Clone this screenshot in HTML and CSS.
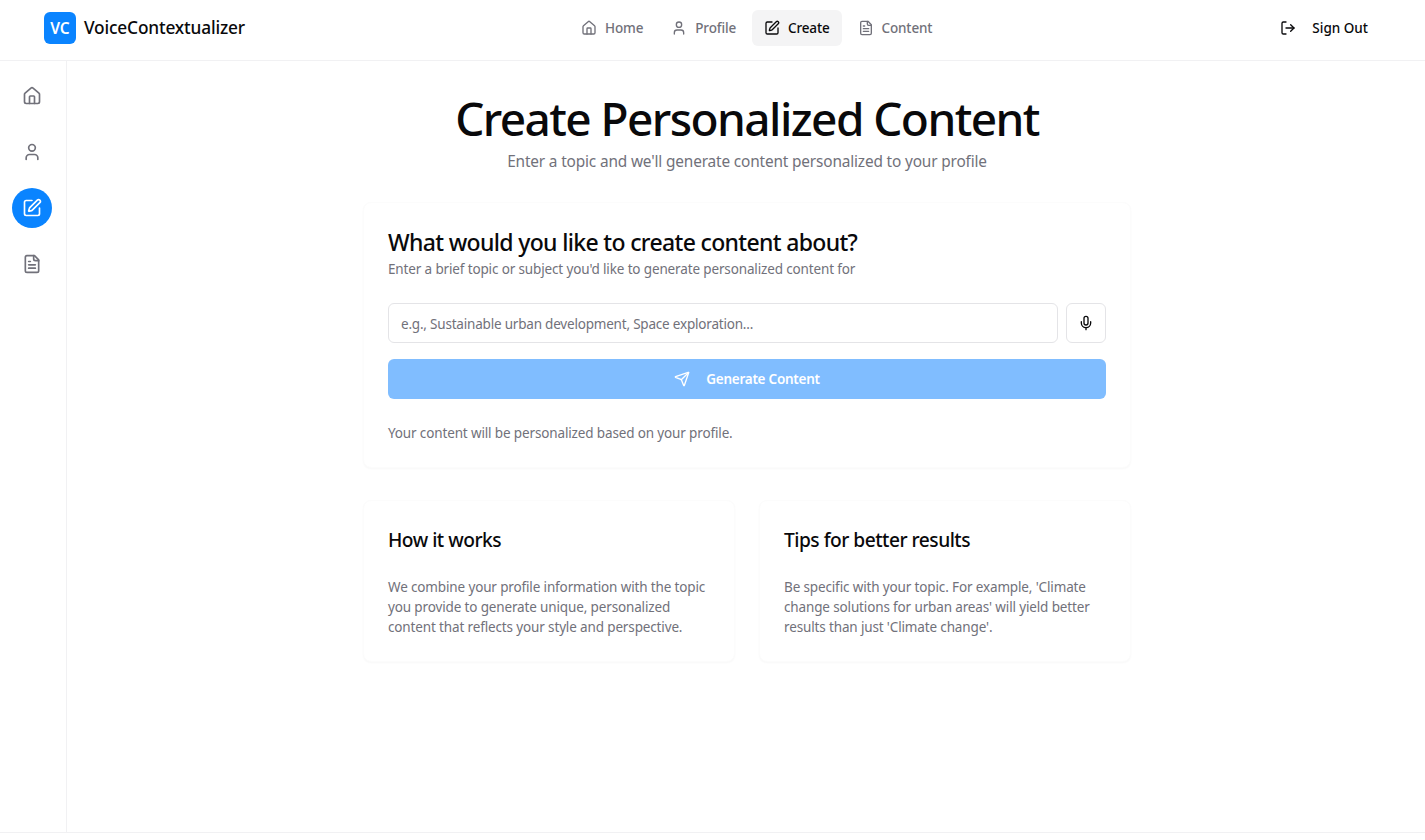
FILE: index.html
```html
<!DOCTYPE html>
<html lang="en">
<head>
<meta charset="utf-8">
<title>VoiceContextualizer</title>
<link rel="stylesheet" href="styles.css">
</head>
<body>
<svg class="defs" aria-hidden="true">
  <symbol id="i-home" viewBox="0 0 24 24"><path d="M15 21v-8a1 1 0 0 0-1-1h-4a1 1 0 0 0-1 1v8"/><path d="M3 10a2 2 0 0 1 .709-1.528l7-5.999a2 2 0 0 1 2.582 0l7 5.999A2 2 0 0 1 21 10v9a2 2 0 0 1-2 2H5a2 2 0 0 1-2-2z"/></symbol>
  <symbol id="i-user" viewBox="0 0 24 24"><path d="M19 21v-2a4 4 0 0 0-4-4H9a4 4 0 0 0-4 4v2"/><circle cx="12" cy="7" r="4"/></symbol>
  <symbol id="i-pen" viewBox="0 0 24 24"><path d="M12 3H5a2 2 0 0 0-2 2v14a2 2 0 0 0 2 2h14a2 2 0 0 0 2-2v-7"/><path d="M18.375 2.625a1 1 0 0 1 3 3l-9.013 9.014a2 2 0 0 1-.853.505l-2.873.84a.5.5 0 0 1-.62-.62l.84-2.873a2 2 0 0 1 .506-.852z"/></symbol>
  <symbol id="i-file" viewBox="0 0 24 24"><path d="M15 2H6a2 2 0 0 0-2 2v16a2 2 0 0 0 2 2h12a2 2 0 0 0 2-2V7Z"/><path d="M14 2v4a2 2 0 0 0 2 2h4"/><path d="M10 9H8"/><path d="M16 13H8"/><path d="M16 17H8"/></symbol>
  <symbol id="i-out" viewBox="0 0 24 24"><path d="M9 21H5a2 2 0 0 1-2-2V5a2 2 0 0 1 2-2h4"/><polyline points="16 17 21 12 16 7"/><line x1="21" x2="9" y1="12" y2="12"/></symbol>
  <symbol id="i-mic" viewBox="0 0 24 24"><path d="M12 2a3 3 0 0 0-3 3v7a3 3 0 0 0 6 0V5a3 3 0 0 0-3-3Z"/><path d="M19 10v2a7 7 0 0 1-14 0v-2"/><line x1="12" x2="12" y1="19" y2="22"/></symbol>
  <symbol id="i-send" viewBox="0 0 24 24"><path d="M14.536 21.686a.5.5 0 0 0 .937-.024l6.5-19a.496.496 0 0 0-.635-.635l-19 6.5a.5.5 0 0 0-.024.937l7.93 3.18a2 2 0 0 1 1.112 1.11z"/><path d="m21.854 2.147-10.94 10.939"/></symbol>
</svg>
<div class="app">
  <header class="topbar">
    <a class="brand" href="#"><span class="logo">VC</span><span class="brand-name">VoiceContextualizer</span></a>
    <nav class="topnav">
      <a class="navlink" href="#"><svg class="ic16"><use href="#i-home"/></svg>Home</a>
      <a class="navlink" href="#"><svg class="ic16"><use href="#i-user"/></svg>Profile</a>
      <a class="navlink active" href="#"><svg class="ic16"><use href="#i-pen"/></svg>Create</a>
      <a class="navlink" href="#"><svg class="ic16"><use href="#i-file"/></svg>Content</a>
    </nav>
    <button class="signout" type="button"><svg class="ic16"><use href="#i-out"/></svg>Sign Out</button>
  </header>
  <div class="body">
    <aside class="sidebar">
      <a class="sidelink" href="#"><svg class="ic20"><use href="#i-home"/></svg></a>
      <a class="sidelink" href="#"><svg class="ic20"><use href="#i-user"/></svg></a>
      <a class="sidelink current" href="#"><svg class="ic20"><use href="#i-pen"/></svg></a>
      <a class="sidelink" href="#"><svg class="ic20"><use href="#i-file"/></svg></a>
    </aside>
    <main class="main">
      <div class="column">
        <div class="intro">
          <h1>Create Personalized Content</h1>
          <p>Enter a topic and we'll generate content personalized to your profile</p>
        </div>
        <section class="card form-card">
          <h2>What would you like to create content about?</h2>
          <p class="muted">Enter a brief topic or subject you'd like to generate personalized content for</p>
          <div class="input-row">
            <input class="topic" type="text" placeholder="e.g., Sustainable urban development, Space exploration...">
            <button class="mic" type="button"><svg class="ic16"><use href="#i-mic"/></svg></button>
          </div>
          <button class="generate" type="button"><svg class="ic16"><use href="#i-send"/></svg>Generate Content</button>
          <p class="muted note">Your content will be personalized based on your profile.</p>
        </section>
        <div class="info-grid">
          <section class="card info-card">
            <h3>How it works</h3>
            <p class="muted">We combine your profile information with the topic you provide to generate unique, personalized content that reflects your style and perspective.</p>
          </section>
          <section class="card info-card">
            <h3>Tips for better results</h3>
            <p class="muted">Be specific with your topic. For example, 'Climate change solutions for urban areas' will yield better results than just 'Climate change'.</p>
          </section>
        </div>
      </div>
    </main>
  </div>
  <footer class="footer"></footer>
</div>
</body>
</html>
```
FILE: styles.css
```css
* { box-sizing: border-box; }
html, body { margin: 0; height: 100%; }
body {
  font-family: "Noto Sans", "Open Sans", sans-serif;
  color: #09090b;
  background: #fff;
  overflow: hidden;
}
a { color: inherit; text-decoration: none; }
.defs { display: none; }
svg { fill: none; stroke: currentColor; stroke-width: 2; stroke-linecap: round; stroke-linejoin: round; flex: none; }
.ic16 { width: 16px; height: 16px; }
.ic20 { width: 20px; height: 20px; }

.app { height: 840px; display: flex; flex-direction: column; }

.topbar {
  height: 61px;
  flex: none;
  display: flex;
  align-items: center;
  justify-content: space-between;
  padding: 0 45px 5px 44px;
  border-bottom: 1px solid #f1f1f3;
}
.brand { display: flex; align-items: center; gap: 8px; }
.logo {
  width: 32px; height: 32px;
  border-radius: 6px;
  background: #0a84ff;
  color: #fff;
  font-weight: 600;
  font-size: 15.5px;
  display: flex; align-items: center; justify-content: center;
}
.brand-name { font-size: 17.3px; font-weight: 500; letter-spacing: -0.16px; }
.topnav { display: flex; gap: 4px; }
.navlink {
  display: flex; align-items: center; gap: 8px;
  height: 36px;
  padding: 0 12px;
  border-radius: 6px;
  font-size: 13.5px;
  font-weight: 500;
  letter-spacing: -0.15px;
  color: #71717a;
}
.navlink.active { background: #f4f4f5; color: #09090b; }
.signout {
  height: 36px;
  display: flex; align-items: center;
  gap: 16px;
  padding: 0 12px;
  border: 0;
  background: none;
  font: inherit;
  font-size: 13.5px;
  font-weight: 500;
  color: #09090b;
}

.body { flex: 1; display: flex; min-height: 0; }
.sidebar {
  width: 67px;
  flex: none;
  border-right: 1px solid #f1f1f3;
  display: flex; flex-direction: column; align-items: center;
  gap: 16px;
  padding: 15px 2px 0 0;
}
.sidelink {
  width: 40px; height: 40px;
  border-radius: 50%;
  display: flex; align-items: center; justify-content: center;
  color: #71717a;
}
.sidelink.current { background: #0a84ff; color: #fff; }

.main { flex: 1; display: flex; justify-content: center; padding: 32px 0 0 2px; }
.column { width: 768px; }

.intro { text-align: center; margin-bottom: 28px; }
h1 { margin: 0; font-size: 46px; line-height: 50px; font-weight: 500; letter-spacing: -1.58px; }
.intro p { margin: 7px 0 0; font-size: 15.4px; line-height: 24px; letter-spacing: -0.16px; color: #71717a; }

.card {
  border-radius: 8px;
  background: #fff;
  box-shadow: 0 1px 2px rgba(0,0,0,.03);
  border: 1px solid #fcfcfc;
}
.form-card { padding: 24px; }
h2 { margin: 0 0 2px; font-size: 23px; line-height: 30px; font-weight: 500; letter-spacing: -0.66px; }
.muted { margin: 0; font-size: 13.5px; line-height: 20px; letter-spacing: -0.14px; color: #71717a; }
.input-row { display: flex; gap: 8px; margin-top: 24px; }
.topic {
  flex: 1;
  height: 40px;
  padding: 2px 12px 0;
  border: 1px solid #e4e4e7;
  border-radius: 6px;
  font: inherit;
  font-size: 13.5px;
  letter-spacing: -0.2px;
  outline: none;
}
.topic::placeholder { color: #71717a; }
.mic {
  width: 40px; height: 40px;
  border: 1px solid #e4e4e7;
  border-radius: 6px;
  background: #fff;
  color: #09090b;
  display: flex; align-items: center; justify-content: center;
  padding: 0;
}
.generate {
  width: 100%;
  height: 40px;
  margin-top: 16px;
  border: 0;
  border-radius: 6px;
  background: #80bdff;
  color: #fff;
  font: inherit;
  font-size: 13.5px;
  font-weight: 600;
  letter-spacing: -0.25px;
  display: flex; align-items: center; justify-content: center;
  gap: 16px;
}
.note { margin-top: 24px; }

.info-grid { display: grid; grid-template-columns: 1fr 1fr; gap: 24px; margin-top: 32px; }
.info-card { padding: 24px; }
h3 { margin: 0 0 22px; font-size: 19.2px; line-height: 30px; font-weight: 500; letter-spacing: -0.5px; }

.footer { height: 8px; flex: none; border-top: 1px solid #f1f1f3; }
```
